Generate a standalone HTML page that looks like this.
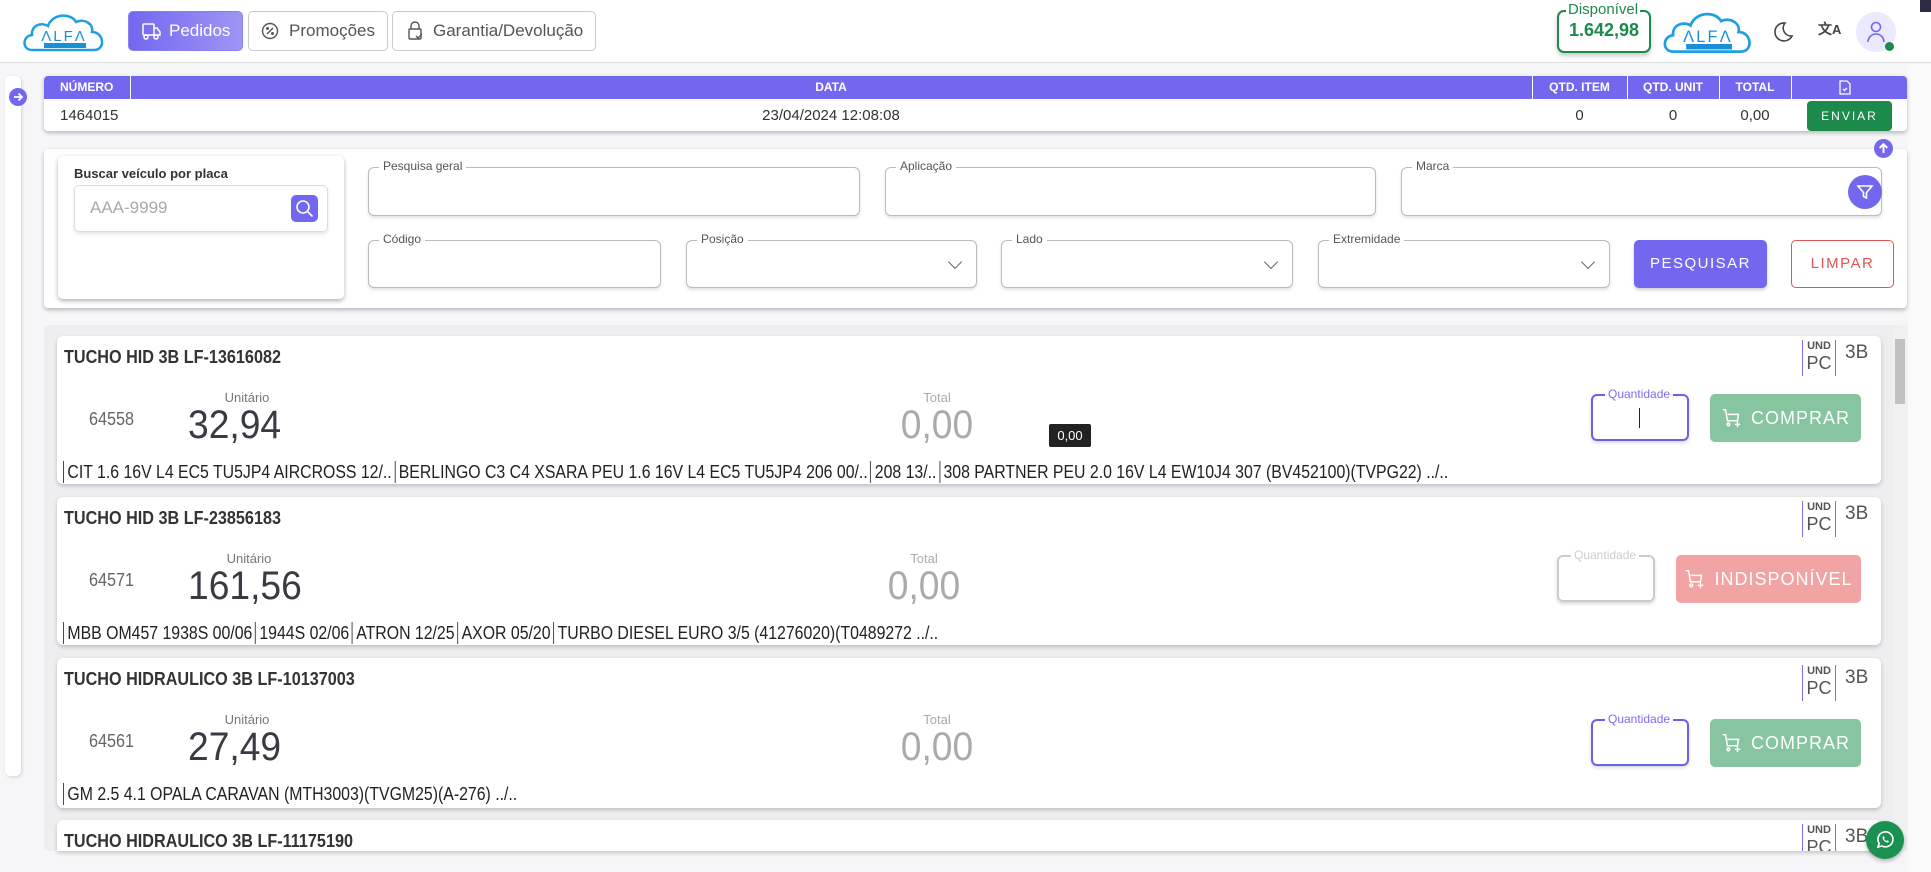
<!DOCTYPE html>
<html><head><meta charset="utf-8"><style>
*{box-sizing:border-box;margin:0;padding:0}
body{width:1931px;height:872px;overflow:hidden;background:#f6f6f8;font-family:"Liberation Sans",sans-serif;position:relative;color:#333}
.a{position:absolute}
.hdr{left:0;top:0;width:1931px;height:63px;background:#fff;border-bottom:1px solid #ddd}
.nb{position:absolute;top:11px;height:40px;border:1px solid #ccc;border-radius:5px;display:flex;align-items:center;font-size:17px;color:#555;background:#fff}
.fs{position:absolute;border:1px solid #bbb;border-radius:6px;background:#fff;box-shadow:0 2px 3px rgba(0,0,0,.12)}
.fs span{position:absolute;top:-9px;left:10px;background:#fff;padding:0 4px;font-size:12px;color:#555}
.chev{position:absolute;right:16px;top:16px;width:10px;height:10px;border-right:1.5px solid #666;border-bottom:1.5px solid #666;transform:rotate(45deg)}
.card{position:absolute;left:57px;width:1824px;height:148px;background:#fff;border-radius:6px;box-shadow:0 2px 4px rgba(0,0,0,.2);overflow:hidden}
.tt{position:absolute;left:7px;top:11px;font-weight:bold;font-size:18px;color:#333;transform:scaleX(.9);transform-origin:left;white-space:nowrap}
.code{position:absolute;left:32px;top:73px;font-size:18px;color:#666;transform:scaleX(.9);transform-origin:left}
.ul{position:absolute;width:100px;text-align:center;top:54px;font-size:13px;color:#777}
.up{position:absolute;left:131px;top:67px;font-size:40px;color:#3a3a44;transform:scaleX(.93);transform-origin:left}
.tl{position:absolute;left:830px;width:100px;text-align:center;top:54px;font-size:13px;color:#aaa}
.tv{position:absolute;left:830px;width:100px;text-align:center;top:67px;font-size:40px;color:#aaa;transform:scaleX(.93)}
.ln{position:absolute;left:6px;top:125px;font-size:18px;color:#222;white-space:nowrap;display:flex;transform:scaleX(.88);transform-origin:left}
.ln b{font-weight:normal;border-left:1px solid #333;padding:0 3px 0 4px;line-height:22px}
.und{position:absolute;left:1745px;top:4px;width:34px;height:36px;border-left:1.5px solid #7b6ef0;border-right:1.5px solid #7b6ef0;text-align:center;color:#555}
.und i{display:block;font-style:normal;font-size:11px;font-weight:bold;line-height:12px}
.und em{display:block;font-style:normal;font-size:18px;line-height:22px}
.b3{position:absolute;left:1788px;top:6px;font-size:19px;color:#555}
.qty{position:absolute;top:58px;width:98px;height:47px;border:2px solid #6b60ee;border-radius:6px;box-shadow:0 2px 3px rgba(0,0,0,.15)}
.qty span{position:absolute;top:-9px;left:12px;background:#fff;padding:0 3px;font-size:12px;color:#7b6ef0}
.btn{position:absolute;top:58px;height:48px;border-radius:5px;color:#fff;font-size:18px;letter-spacing:1px;display:flex;align-items:center;justify-content:center;gap:8px}
</style></head><body>
<div class="a hdr"></div>
<svg class="a" style="left:22px;top:10px" width="84" height="44" viewBox="0 0 84 44"><path d="M10 40 C0 40 0 26 10 25 C9 15 20 12 26 16 C30 4 48 2 54 12 C62 8 72 14 70 22 C82 22 84 40 72 40 Z" fill="#fff" stroke="#1ea0e0" stroke-width="2.5"/><text x="42" y="31" font-size="15" fill="#1a8fd8" text-anchor="middle" font-family="Liberation Sans" letter-spacing="2">ΛLFΛ</text><rect x="22" y="33" width="42" height="5" fill="#1a8fd8"/></svg>
<svg class="a" style="left:1660px;top:8px" width="96" height="48" viewBox="0 0 84 44"><path d="M10 40 C0 40 0 26 10 25 C9 15 20 12 26 16 C30 4 48 2 54 12 C62 8 72 14 70 22 C82 22 84 40 72 40 Z" fill="#fff" stroke="#1ea0e0" stroke-width="2.5"/><text x="42" y="31" font-size="15" fill="#1a8fd8" text-anchor="middle" font-family="Liberation Sans" letter-spacing="2">ΛLFΛ</text><rect x="22" y="33" width="42" height="5" fill="#1a8fd8"/></svg>
<div class="nb" style="left:128px;width:115px;background:linear-gradient(90deg,#7367f0,#9e95f5);border-color:#8a80f2;color:#fff"><svg style="margin:0 8px 0 12px" width="20" height="18" viewBox="0 0 20 18" fill="none" stroke="#fff" stroke-width="1.5"><rect x="2" y="2" width="11" height="11" rx="1"/><path d="M13 6h3l3 4v3h-6"/><circle cx="5" cy="15" r="2"/><circle cx="15" cy="15" r="2"/></svg>Pedidos</div>
<div class="nb" style="left:248px;width:140px"><svg style="margin:0 10px 0 12px" width="18" height="18" viewBox="0 0 18 18" fill="none" stroke="#555" stroke-width="1.4"><circle cx="9" cy="9" r="7.5"/><path d="M6 12l6-6"/><circle cx="6.5" cy="6.5" r=".8"/><circle cx="11.5" cy="11.5" r=".8"/></svg>Promoções</div>
<div class="nb" style="left:392px;width:204px"><svg style="margin:0 10px 0 14px" width="16" height="20" viewBox="0 0 16 20" fill="none" stroke="#555" stroke-width="1.4"><path d="M4 8V5a4 4 0 0 1 8 0v3"/><rect x="2" y="8" width="12" height="10" rx="1"/><path d="M9 15l2 2 4-4"/></svg>Garantia/Devolução</div>
<div class="a" style="left:1557px;top:10px;width:94px;height:43px;border:2.5px solid #1b8a4b;border-radius:7px;background:#fff;box-shadow:0 3px 5px rgba(0,0,0,.2)"></div>
<div class="a" style="left:1566px;top:1px;background:#fff;padding:0 2px;font-size:15px;color:#1b8a4b">Disponível</div>
<div class="a" style="left:1557px;top:20px;width:94px;text-align:center;font-size:18px;font-weight:bold;color:#1b8a4b">1.642,98</div>
<svg class="a" style="left:1772px;top:21px" width="22" height="22" viewBox="0 0 22 22"><path d="M13 2a9 9 0 1 0 7 13A8 8 0 0 1 13 2z" fill="none" stroke="#444" stroke-width="1.6"/></svg>
<div class="a" style="left:1818px;top:19px;font-size:14px;color:#444;font-weight:bold">文<span style="font-size:13px">A</span></div>
<div class="a" style="left:1856px;top:12px;width:40px;height:40px;border-radius:50%;background:#ebe9fd"></div>
<svg class="a" style="left:1866px;top:20px" width="20" height="24" viewBox="0 0 20 24" fill="none" stroke="#7367f0" stroke-width="1.6"><circle cx="10" cy="7" r="4.5"/><path d="M2 22a8 8 0 0 1 16 0"/></svg>
<div class="a" style="left:1885px;top:42px;width:9px;height:9px;border-radius:50%;background:#1b8a4b"></div>
<div class="a" style="left:1920px;top:0;width:11px;height:12px;background:#2c2c44"></div>
<div class="a" style="left:1908px;top:64px;width:23px;height:808px;background:#fafafa"></div>

<div class="a" style="left:5px;top:76px;width:16px;height:700px;background:#fff;border-radius:5px;box-shadow:1px 1px 3px rgba(0,0,0,.15)"></div>
<div class="a" style="left:9px;top:88px;width:18px;height:18px;border-radius:50%;background:#7367f0"></div>
<svg class="a" style="left:12px;top:91px" width="12" height="12" viewBox="0 0 12 12" fill="none" stroke="#fff" stroke-width="1.8"><path d="M2 6h8M6.5 2.5L10 6l-3.5 3.5"/></svg>

<div class="a" style="left:44px;top:76px;width:1863px;height:55px;background:#fff;border-radius:4px;box-shadow:0 2px 4px rgba(0,0,0,.25);overflow:hidden;font-size:13px">
<div class="a" style="left:0;top:0;width:1863px;height:23px;background:#7367f0;color:#fff;font-weight:bold;font-size:12px;line-height:23px">
<div class="a" style="left:16px">NÚMERO</div>
<div class="a" style="left:86px;top:0;width:1px;height:23px;background:#fff"></div>
<div class="a" style="left:86px;width:1402px;text-align:center">DATA</div>
<div class="a" style="left:1488px;height:23px;width:1px;background:#fff"></div>
<div class="a" style="left:1488px;width:95px;text-align:center">QTD. ITEM</div>
<div class="a" style="left:1583px;height:23px;width:1px;background:#fff"></div>
<div class="a" style="left:1583px;width:92px;text-align:center">QTD. UNIT</div>
<div class="a" style="left:1675px;height:23px;width:1px;background:#fff"></div>
<div class="a" style="left:1675px;width:72px;text-align:center">TOTAL</div>
<div class="a" style="left:1747px;height:23px;width:1px;background:#fff"></div>
<svg class="a" style="left:1795px;top:4px" width="12" height="15" viewBox="0 0 12 15" fill="none" stroke="#fff" stroke-width="1.3"><path d="M1 1h7l3 3v10H1z"/><path d="M4 9l1.5 1.5L8 8"/></svg>
</div>
<div class="a" style="left:16px;top:31px;font-size:15px;color:#333">1464015</div>
<div class="a" style="left:86px;width:1402px;top:31px;text-align:center;font-size:15px;color:#333">23/04/2024 12:08:08</div>
<div class="a" style="left:1488px;width:95px;top:31px;text-align:center;font-size:15px;color:#333">0</div>
<div class="a" style="left:1583px;width:92px;top:31px;text-align:center;font-size:15px;color:#333">0</div>
<div class="a" style="left:1675px;width:72px;top:31px;text-align:center;font-size:15px;color:#333">0,00</div>
<div class="a" style="left:1763px;top:25px;width:85px;height:30px;background:#1b8a4b;border-radius:4px;color:#fff;font-size:12px;letter-spacing:2px;text-align:center;line-height:30px">ENVIAR</div>
</div>

<div class="a" style="left:44px;top:149px;width:1863px;height:159px;background:#fff;border-radius:4px;box-shadow:0 2px 4px rgba(0,0,0,.25)"></div>
<div class="a" style="left:1874px;top:139px;width:19px;height:19px;border-radius:50%;background:#7367f0"></div>
<svg class="a" style="left:1877px;top:142px" width="13" height="13" viewBox="0 0 12 12" fill="none" stroke="#fff" stroke-width="1.8"><path d="M6 10V2M2.5 5.5L6 2l3.5 3.5"/></svg>
<div class="a" style="left:58px;top:156px;width:286px;height:143px;background:#fff;border-radius:5px;box-shadow:0 2px 5px rgba(0,0,0,.3)"></div>
<div class="a" style="left:74px;top:166px;font-size:13px;font-weight:bold;color:#333">Buscar veículo por placa</div>
<div class="a" style="left:74px;top:185px;width:254px;height:47px;border:1px solid #ddd;border-radius:5px;box-shadow:0 2px 3px rgba(0,0,0,.1)"></div>
<div class="a" style="left:90px;top:198px;font-size:17px;color:#aaa">AAA-9999</div>
<div class="a" style="left:291px;top:195px;width:27px;height:27px;border-radius:5px;background:#7367f0"></div>
<svg class="a" style="left:295px;top:199px" width="19" height="19" viewBox="0 0 19 19" fill="none" stroke="#fff" stroke-width="1.6"><circle cx="8" cy="8" r="6"/><path d="M12.5 12.5l5 5"/></svg>

<div class="fs" style="left:368px;top:167px;width:492px;height:49px"><span>Pesquisa geral</span></div>
<div class="fs" style="left:885px;top:167px;width:491px;height:49px"><span>Aplicação</span></div>
<div class="fs" style="left:1401px;top:167px;width:481px;height:49px"><span>Marca</span></div>
<div class="a" style="left:1848px;top:175px;width:34px;height:34px;border-radius:50%;background:#7367f0"></div>
<svg class="a" style="left:1856px;top:183px" width="18" height="18" viewBox="0 0 18 18" fill="none" stroke="#fff" stroke-width="1.6"><path d="M2 3h14l-5.5 6.5V15l-3-1.5V9.5z"/></svg>
<div class="fs" style="left:368px;top:240px;width:293px;height:48px"><span>Código</span></div>
<div class="fs" style="left:686px;top:240px;width:291px;height:48px"><span>Posição</span><div class="chev"></div></div>
<div class="fs" style="left:1001px;top:240px;width:292px;height:48px"><span>Lado</span><div class="chev"></div></div>
<div class="fs" style="left:1318px;top:240px;width:292px;height:48px"><span>Extremidade</span><div class="chev"></div></div>
<div class="a" style="left:1634px;top:240px;width:133px;height:48px;background:#7367f0;border-radius:5px;color:#fff;font-size:15px;letter-spacing:1.5px;text-align:center;line-height:48px;box-shadow:0 2px 3px rgba(0,0,0,.2)">PESQUISAR</div>
<div class="a" style="left:1791px;top:240px;width:103px;height:48px;border:1px solid #e05555;border-radius:5px;color:#e05555;font-size:15px;letter-spacing:1.5px;text-align:center;line-height:46px">LIMPAR</div>

<div class="a" style="left:1893px;top:325px;width:15px;height:526px;background:#f1f1f1"></div>
<div class="a" style="left:1895px;top:339px;width:10px;height:65px;background:#c1c1c1"></div>
<div class="a" style="left:44px;top:325px;width:1849px;height:526px;background:#eeeef0"></div>

<svg width="0" height="0" style="position:absolute"><defs><symbol id="cart" viewBox="0 0 24 24"><g fill="none" stroke="#fff" stroke-width="1.6"><path d="M2 3h3l2 12h11l1-7H7"/><circle cx="8" cy="19" r="1.5"/><path d="M18 16v6M15 19h6"/></g></symbol></defs></svg>

<div class="card" style="top:336px">
<div class="tt">TUCHO HID 3B LF-13616082</div>
<div class="code">64558</div><div class="ul" style="left:140px">Unitário</div><div class="up">32,94</div>
<div class="tl">Total</div><div class="tv">0,00</div>
<div class="a" style="left:992px;top:88px;width:42px;height:23px;background:#222;color:#fff;font-size:13px;text-align:center;line-height:23px;border-radius:2px">0,00</div>
<div class="ln"><b>CIT 1.6 16V L4 EC5 TU5JP4 AIRCROSS 12/..</b><b>BERLINGO C3 C4 XSARA PEU 1.6 16V L4 EC5 TU5JP4 206 00/..</b><b>208 13/..</b><b>308 PARTNER PEU 2.0 16V L4 EW10J4 307 (BV452100)(TVPG22) ../..</b></div>
<div class="und"><i>UND</i><em>PC</em></div><div class="b3">3B</div>
<div class="qty" style="left:1534px"><span>Quantidade</span><div class="a" style="left:46px;top:12px;width:1px;height:20px;background:#222"></div></div>
<div class="btn" style="left:1653px;width:151px;background:#86c5a0"><svg width="22" height="22"><use href="#cart"/></svg><span>COMPRAR</span></div>
</div>
<div class="card" style="top:497px">
<div class="tt">TUCHO HID 3B LF-23856183</div>
<div class="code">64571</div><div class="ul" style="left:142px">Unitário</div><div class="up">161,56</div>
<div class="tl" style="left:817px">Total</div><div class="tv" style="left:817px">0,00</div>
<div class="ln"><b>MBB OM457 1938S 00/06</b><b>1944S 02/06</b><b>ATRON 12/25</b><b>AXOR 05/20</b><b>TURBO DIESEL EURO 3/5 (41276020)(T0489272 ../..</b></div>
<div class="und"><i>UND</i><em>PC</em></div><div class="b3">3B</div>
<div class="qty" style="left:1500px;border-color:#ccc"><span style="color:#ccc">Quantidade</span></div>
<div class="btn" style="left:1619px;width:185px;background:#f2a3a3"><svg width="22" height="22"><use href="#cart"/></svg><span>INDISPONÍVEL</span></div>
</div>
<div class="card" style="top:658px;height:150px">
<div class="tt">TUCHO HIDRAULICO 3B LF-10137003</div>
<div class="code">64561</div><div class="ul" style="left:140px">Unitário</div><div class="up">27,49</div>
<div class="tl">Total</div><div class="tv">0,00</div>
<div class="ln"><b>GM 2.5 4.1 OPALA CARAVAN (MTH3003)(TVGM25)(A-276) ../..</b></div>
<div class="und" style="top:7px"><i>UND</i><em>PC</em></div><div class="b3" style="top:9px">3B</div>
<div class="qty" style="left:1534px;top:61px"><span>Quantidade</span></div>
<div class="btn" style="left:1653px;top:61px;width:151px;background:#86c5a0"><svg width="22" height="22"><use href="#cart"/></svg><span>COMPRAR</span></div>
</div>
<div class="card" style="top:820px;height:31px;border-radius:6px 6px 0 0">
<div class="tt">TUCHO HIDRAULICO 3B LF-11175190</div>
<div class="und" style="top:4px"><i>UND</i><em>PC</em></div><div class="b3">3B</div>
</div>
<div class="a" style="left:1866px;top:821px;width:38px;height:38px;border-radius:50%;background:#1a9150;box-shadow:0 2px 4px rgba(0,0,0,.3)"></div>
<svg class="a" style="left:1875px;top:830px" width="20" height="20" viewBox="0 0 20 20" fill="none" stroke="#fff" stroke-width="1.6"><path d="M3 17l1.2-3.5A7.5 7.5 0 1 1 7 16z"/><path d="M7.5 7c0 3 2.5 5.5 5.5 5.5l1-1.3-1.8-1-1 .8c-1-.5-1.8-1.3-2.2-2.2l.8-1-1-1.8z" fill="#fff" stroke="none"/></svg>
</body></html>
